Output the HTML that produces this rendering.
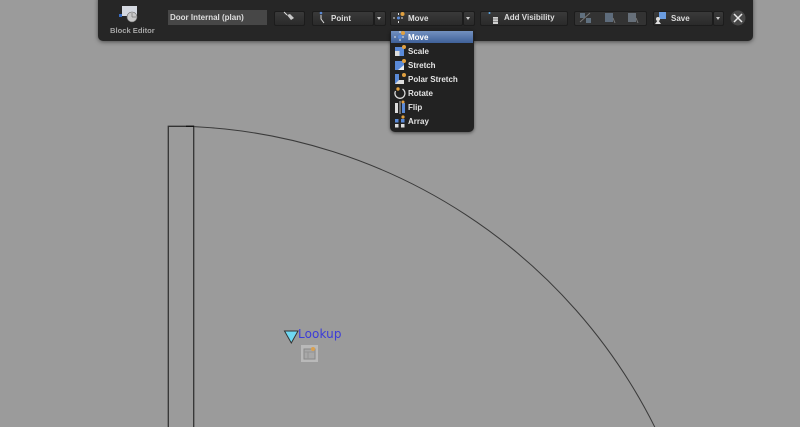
<!DOCTYPE html>
<html><head><meta charset="utf-8"><style>
html,body{margin:0;padding:0;width:800px;height:427px;overflow:hidden;background:#9b9b9b}
body{font-family:"Liberation Sans",sans-serif}
#w{position:absolute;left:0;top:0;width:800px;height:427px;filter:blur(.35px)}
.a{position:absolute}
#bar{left:98px;top:-6px;width:655px;height:47px;background:#262626;border-radius:5px;box-shadow:0 1px 4px rgba(0,0,0,.5)}
.b{position:absolute;height:15px;top:10.5px;box-sizing:border-box;background:linear-gradient(#3a3a3a,#2a2a2a);border:1px solid #1c1c1c;border-radius:2px}
.t{position:absolute;color:#dcdcdc;font-size:8px;font-weight:bold;white-space:nowrap}
.c{position:absolute;width:0;height:0;border-left:2.5px solid transparent;border-right:2.5px solid transparent;border-top:3px solid #ccc}
#menu{left:390px;top:29px;width:84px;height:103px;background:#222;border-radius:5px;box-shadow:0 1px 3px rgba(0,0,0,.5)}
#sel{position:absolute;left:1px;top:2px;width:82px;height:12px;background:linear-gradient(#7391c0,#3f6199)}
.m{position:absolute;left:18px;color:#e4e4e4;font-size:8px;font-weight:bold;line-height:14px;white-space:nowrap}
</style></head><body><div id="w">
<svg class="a" style="left:0;top:0" width="800" height="427" viewBox="0 0 800 427">
<g fill="none" stroke="#333" stroke-width="1.3">
<path d="M168.3 427V126.3H193.7V427"/>
<path d="M186 126.3H194" stroke="#111"/>
<path d="M194 126.6A544 544 0 0 1 655 427.5" stroke="#3a3a3a" stroke-width="1"/>
</g>
<path d="M284.5 331H298L291.3 343Z" fill="#6fd8f2" stroke="#333" stroke-width="1"/>
<rect x="301" y="345" width="17" height="17" fill="#b9b9b9"/>
<rect x="304" y="349" width="11" height="10" fill="#a8a8a8" stroke="#888" stroke-width="1"/>
<path d="M304 352H315M308 352V359" stroke="#949494" fill="none"/>
<circle cx="313" cy="349" r="2" fill="#d8a050"/>
</svg>
<div class="a" style="left:298px;top:326px;line-height:16px;color:#3c3cd8;letter-spacing:.1px;font-family:'DejaVu Sans',sans-serif;font-size:12px">Lookup</div>

<div class="a" id="bar"></div>
<svg class="a" style="left:118px;top:4px" width="28" height="20" viewBox="0 0 28 20">
<rect x="4" y="2" width="15" height="10" fill="#d4d8e0"/>
<rect x="1" y="10" width="3" height="3" fill="#3a6cc0"/>
<circle cx="14" cy="13" r="5" fill="#c8c8c8" stroke="#666" stroke-width=".6"/>
<path d="M14 13V9M14 13H18" stroke="#777" stroke-width=".7"/>
</svg>
<div class="t" style="left:110px;top:25px;color:#a5a5a5;line-height:11px;font-size:7.6px">Block Editor</div>
<div class="a" style="left:168px;top:10px;width:99px;height:15px;background:#474747;color:#dedede;font-size:8px;font-weight:bold;line-height:15px;text-indent:2px;white-space:nowrap">Door Internal (plan)</div>

<div class="b" style="left:274px;width:31px"></div>
<svg class="a" style="left:283px;top:11px" width="14" height="12"><path d="M1 1L4 4" stroke="#ddd"/><path d="M4 4L7 3L11 7L8 9Z" fill="#c8c8c8"/></svg>

<div class="b" style="left:312px;width:62px"></div>
<svg class="a" style="left:318px;top:11px" width="10" height="14"><circle cx="3" cy="2" r="1.3" fill="#5a8ad8"/><path d="M3 4L3 8L6 12" stroke="#ddd" fill="none"/></svg>
<div class="t" style="left:331px;top:13px;line-height:11px">Point</div>
<div class="b" style="left:374px;width:12px"></div><div class="c" style="left:377px;top:17px"></div>

<div class="b" style="left:390px;width:73px"></div>
<svg class="a" style="left:391px;top:11px" width="16" height="14"><path d="M2 7H13M7.5 2V12" stroke="#ddd" stroke-dasharray="2 2"/><circle cx="7.5" cy="7" r="1.5" fill="#5a8ad8"/><circle cx="11.5" cy="3" r="2" fill="#e0a040"/></svg>
<div class="t" style="left:408px;top:13px;line-height:11px">Move</div>
<div class="b" style="left:463px;width:12px"></div><div class="c" style="left:466px;top:17px"></div>

<div class="b" style="left:480px;width:88px"></div>
<svg class="a" style="left:487px;top:11px" width="14" height="14"><circle cx="2.5" cy="2" r="1" fill="#5aa8e8"/><rect x="6" y="6" width="5" height="7" fill="#d0d0d0"/><path d="M6 8H11M6 10.5H11" stroke="#444" stroke-width=".6"/></svg>
<div class="t" style="left:504px;top:12px;line-height:11px">Add Visibility</div>

<div class="b" style="left:574px;width:73px;background:#333"></div>
<svg class="a" style="left:574px;top:10px" width="73" height="16">
<rect x="6" y="3" width="5" height="5" fill="#60707f"/><rect x="12" y="8" width="5" height="5" fill="#60707f"/><path d="M6 12L16 3" stroke="#777"/>
<rect x="31" y="3" width="8" height="9" fill="#5e6c7c"/><path d="M39 8L41 13" stroke="#777"/>
<rect x="54" y="3" width="8" height="9" fill="#666f79"/><path d="M62 8L64 13" stroke="#777"/>
</svg>

<div class="b" style="left:653px;width:60px"></div>
<svg class="a" style="left:654px;top:11px" width="14" height="14"><rect x="5" y="1" width="7" height="7" fill="#6a9ce0"/><circle cx="4" cy="8" r="2" fill="#ddd"/><path d="M1 13L4 9L7 13Z" fill="#ddd"/></svg>
<div class="t" style="left:671px;top:13px;line-height:11px">Save</div>
<div class="b" style="left:713px;width:11px"></div><div class="c" style="left:716px;top:17px"></div>

<svg class="a" style="left:730px;top:10px" width="16" height="16"><circle cx="8" cy="8" r="7.5" fill="#474747"/><path d="M4 4L12 12M12 4L4 12" stroke="#e8e8e8" stroke-width="1.5"/></svg>

<div class="a" id="menu">
<div id="sel"></div>
<svg class="a" style="left:0;top:0" width="18" height="103">
<path d="M4 8H16M10 2V14" stroke="#e8e8e8" stroke-dasharray="2 2"/><circle cx="10" cy="8" r="2" fill="#5a8ad8"/><circle cx="13" cy="4" r="2" fill="#e0a040"/>
<rect x="5" y="18" width="9" height="9" fill="#5a8ad8"/><rect x="5" y="22" width="4.5" height="5" fill="#ddd"/><circle cx="14" cy="18" r="2" fill="#e0a040"/>
<rect x="5" y="32" width="9" height="9" fill="#5a8ad8"/><path d="M8 41L14 36V41Z" fill="#eee"/><circle cx="14" cy="32" r="2" fill="#e0a040"/>
<rect x="5" y="45" width="4" height="10" fill="#5a8ad8"/><path d="M5 55H14V51H9Z" fill="#ddd"/><circle cx="14" cy="46" r="2" fill="#e0a040"/>
<path d="M12.5 60A5 5 0 1 1 5.5 62" fill="none" stroke="#ddd" stroke-width="1.3"/><circle cx="8" cy="60" r="1.7" fill="#e0a040"/>
<path d="M5 74H8V84H5Z" fill="#ddd"/><path d="M10 72V85" stroke="#bbb"/><path d="M12 74H15V84H12Z" fill="#5a8ad8"/><circle cx="13" cy="73" r="1.5" fill="#e0a040"/>
<rect x="5" y="90" width="3.5" height="3.5" fill="#5a8ad8"/><rect x="11" y="90" width="3.5" height="3.5" fill="#5a8ad8"/><rect x="5" y="95" width="3.5" height="3.5" fill="#ddd"/><rect x="11" y="95" width="3.5" height="3.5" fill="#ddd"/><circle cx="13" cy="88" r="1.6" fill="#e0a040"/>
</svg>
<div class="m" style="top:2px;color:#fff">Move</div>
<div class="m" style="top:16px">Scale</div>
<div class="m" style="top:30px">Stretch</div>
<div class="m" style="top:44px">Polar Stretch</div>
<div class="m" style="top:58px">Rotate</div>
<div class="m" style="top:72px">Flip</div>
<div class="m" style="top:86px">Array</div>
</div>
</div></body></html>
